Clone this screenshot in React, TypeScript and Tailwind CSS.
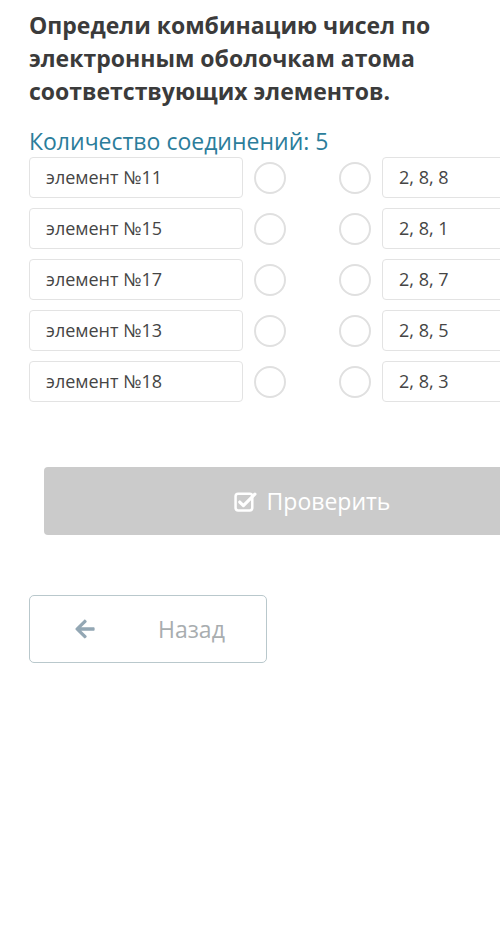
import { FaArrowLeft } from "react-icons/fa";

const rows = [
  { left: "элемент №11", right: "2, 8, 8" },
  { left: "элемент №15", right: "2, 8, 1" },
  { left: "элемент №17", right: "2, 8, 7" },
  { left: "элемент №13", right: "2, 8, 5" },
  { left: "элемент №18", right: "2, 8, 3" },
];

function CheckSquare() {
  return (
    <svg width="23" height="21" viewBox="0 0 22 20" aria-hidden="true">
      <rect x="1.5" y="2.5" width="16" height="16" rx="2.5" fill="none" stroke="white" strokeWidth="2.4" />
      <path d="M5.5 10.5 L9 14 L20 3" fill="none" stroke="white" strokeWidth="3" strokeLinecap="round" strokeLinejoin="round" />
    </svg>
  );
}

export default function App() {
  return (
    <div className="h-[932px] w-[500px] overflow-hidden bg-white font-['Open_Sans',sans-serif]">
      <div className="w-[600px] pl-[29px] pt-[9px]">
        <h1 className="w-[440px] text-[23px] font-bold leading-[33px] text-[#3b3b3b]">
          Определи комбинацию чисел по электронным оболочкам атома соответствующих элементов.
        </h1>

        <p className="mt-[19px] text-[23px] leading-[28px] text-[#2b7d9b]">
          Количество соединений: 5
        </p>

        <ul className="mt-[2px] space-y-[10px]">
          {rows.map(({ left, right }) => (
            <li key={left} className="flex items-center">
              <div className="flex h-[41px] w-[214px] items-center rounded-[4px] border border-[#e3e3e3] px-4 text-[18px] text-[#454545]">
                {left}
              </div>
              <span className="ml-[11px] size-[32px] rounded-full border-[2px] border-[#e0e0e0]" />
              <span className="ml-[53px] size-[32px] rounded-full border-[2px] border-[#e0e0e0]" />
              <div className="ml-[11px] flex h-[41px] w-[214px] items-center rounded-[4px] border border-[#e3e3e3] px-4 text-[18px] text-[#454545]">
                {right}
              </div>
            </li>
          ))}
        </ul>

        <button className="ml-[15px] mt-[65px] flex h-[68px] w-[536px] items-center justify-center gap-[10px] rounded-[4px] bg-[#cbcbcb] text-[23px] text-white">
          <CheckSquare />
          <span>Проверить</span>
        </button>

        <button className="mt-[60px] flex h-[68px] w-[238px] items-center rounded-[5px] border border-[#b9c8cc] text-[23px] text-[#a8adaf]">
          <FaArrowLeft className="ml-[44px] size-[22px] text-[#93a7b4]" aria-hidden="true" />
          <span className="ml-[62px]">Назад</span>
        </button>
      </div>
    </div>
  );
}
